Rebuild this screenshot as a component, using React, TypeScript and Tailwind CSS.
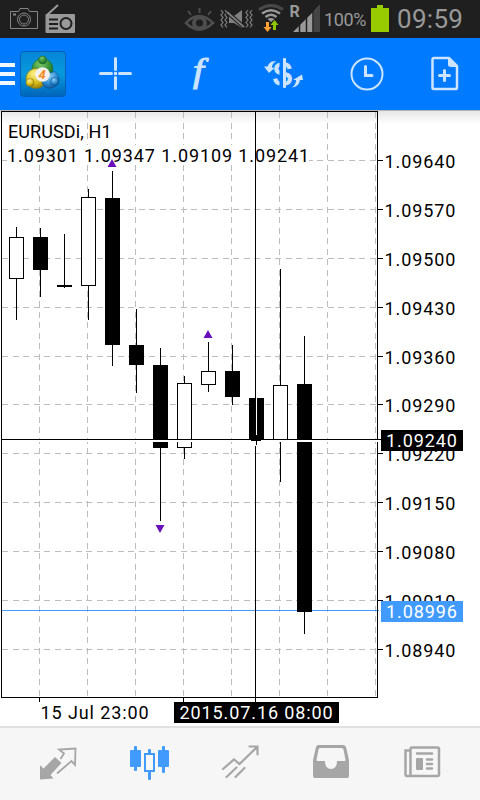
import React from 'react';

interface Candle {
  x: number;
  high: number;
  top: number;
  bottom: number;
  low: number;
  hollow?: boolean;
}

// Candle geometry in chart pixels, x is the column of the wick
const CANDLES: Candle[] = [
  { x: 16, high: 227, top: 237, bottom: 279, low: 320, hollow: true },
  { x: 40, high: 228, top: 237, bottom: 270, low: 297 },
  { x: 64, high: 234, top: 285, bottom: 287, low: 288 },
  { x: 88, high: 189, top: 197, bottom: 286, low: 320, hollow: true },
  { x: 112, high: 171, top: 198, bottom: 345, low: 366 },
  { x: 136, high: 309, top: 345, bottom: 365, low: 393 },
  { x: 160, high: 348, top: 365, bottom: 448, low: 521 },
  { x: 184, high: 376, top: 383, bottom: 448, low: 459, hollow: true },
  { x: 208, high: 342, top: 371, bottom: 385, low: 392, hollow: true },
  { x: 232, high: 345, top: 371, bottom: 397, low: 405 },
  { x: 256, high: 398, top: 398, bottom: 440, low: 445 },
  { x: 280, high: 269, top: 385, bottom: 442, low: 482, hollow: true },
  { x: 304, high: 336, top: 384, bottom: 612, low: 634 },
];

const PRICES = [
  { y: 160, label: '1.09640' },
  { y: 209, label: '1.09570' },
  { y: 258, label: '1.09500' },
  { y: 307, label: '1.09430' },
  { y: 356, label: '1.09360' },
  { y: 404, label: '1.09290' },
  { y: 453, label: '1.09220' },
  { y: 502, label: '1.09150' },
  { y: 551, label: '1.09080' },
  { y: 600, label: '1.09010' },
  { y: 649, label: '1.08940' },
];

const COLUMNS = [39, 87, 135, 183, 231, 279, 327, 375];

const StatusBar = () => (
  <div className="flex h-[38px] items-center bg-[#1f1f1f] text-[#999]">
    {/* Camera */}
    <svg width="42" height="38" fill="none" stroke="#858585">
      <path d="M10.5 11.5h8l1.5-3h8l1.500 3h8v17h-27z" />
      <circle cx="24" cy="19.500" r="6.500" />
      <circle cx="24" cy="19.500" r="4.500" />
      <path d="M13 14.500h3" strokeWidth="2" />
    </svg>
    {/* Radio */}
    <svg width="38" height="38" fill="none" stroke="#999">
      <path d="M5 15L16 5" strokeWidth="2" />
      <rect x="3.500" y="14" width="29.500" height="19" rx="1" fill="#999" stroke="none" />
      <path d="M7 19.500h9M7 24h9M7 28.500h9" stroke="#1f1f1f" strokeWidth="1.800" />
      <circle cx="24" cy="23.500" r="5.500" stroke="#1f1f1f" strokeWidth="2" />
    </svg>
    <div className="flex-1" />
    {/* Eye */}
    <svg width="37" height="38" fill="none" stroke="#4d4d4d">
      <path d="M6 23Q19 9 33 23Q19 36 6 23Z" strokeWidth="2.500" />
      <circle cx="19.500" cy="23" r="5.500" strokeWidth="4" />
      <path d="M19.500 8v5M8 11l3 4M31 11l-3 4" strokeWidth="2" />
    </svg>
    {/* Sound off, vibrate */}
    <svg width="38" height="38" fill="none" stroke="#808080">
      <path d="M4 10l2 2.500-2 2.500 2 2.500-2 2.500 2 2.500-2 2.500 2 2.500M8 10l2 2.500-2 2.500 2 2.500-2 2.500 2 2.500-2 2.500 2 2.500M31 10l-2 2.500 2 2.500-2 2.500 2 2.500-2 2.500 2 2.500-2 2.500M35 10l-2 2.500 2 2.500-2 2.500 2 2.500-2 2.500 2 2.500-2 2.500" strokeWidth="1.200" />
      <path d="M12 16h5l8-6v18l-8-5h-5z" fill="#808080" stroke="none" />
      <path d="M10 12l17 15" stroke="#1f1f1f" strokeWidth="4" />
      <path d="M10 12l17 15" strokeWidth="1.800" />
    </svg>
    {/* Wifi with traffic arrows */}
    <svg width="33" height="38" fill="none">
      <path d="M4 9.500Q16 1.500 28 9.500" stroke="#484848" strokeWidth="3" />
      <path d="M7 13.500Q16 7 25 13.500M10.500 17Q16 12.500 21.500 17" stroke="#999" strokeWidth="2.500" />
      <path d="M12.500 19q3.500-2 7 0l-3.500 3z" fill="#999" />
      <path d="M11 22h3v5h2.500L12.500 32 8.500 27H11z" fill="#ffa033" />
      <path d="M18 30h3v-5h2.500L19.500 20l-4 5H18z" fill="#8fc800" />
    </svg>
    {/* Roaming signal */}
    <svg width="34" height="38">
      <text x="1.500" y="17" fill="#999" className="font-['Roboto',sans-serif] text-[16px] font-bold">R</text>
      <path d="M5 32L32 5v27z" fill="#999" />
      <path d="M25.500 11.500L32 5v27h-6.500z" fill="#444" />
      <path d="M11.500 22v10M18.500 15v17M25 9v23" stroke="#1f1f1f" strokeWidth="1.500" />
    </svg>
    <span className="w-[46px] pl-0.5 font-['Roboto',sans-serif] text-[18px] tracking-[-0.4px]">100%</span>
    <svg width="24" height="38" fill="#99cc00">
      <path d="M9 5h6v3h6v24H3V8h6z" />
    </svg>
    <span className="w-[88px] pl-[5px] font-['Roboto',sans-serif] text-[26px] tracking-[0.3px]">09:59</span>
  </div>
);

const Logo = () => (
  <svg width="46" height="46" viewBox="0 0 46 46">
    <defs>
      <linearGradient id="tile" x1="0" y1="0" x2="0" y2="1">
        <stop offset="0" stopColor="#0786d8" />
        <stop offset="0.5" stopColor="#0799dc" />
        <stop offset="1" stopColor="#0065bb" />
      </linearGradient>
      <radialGradient id="green" cx="0.4" cy="0.25" r="0.8">
        <stop offset="0" stopColor="#7fc766" />
        <stop offset="0.6" stopColor="#2f8e35" />
        <stop offset="1" stopColor="#1a5f24" />
      </radialGradient>
      <radialGradient id="yellow" cx="0.4" cy="0.25" r="0.8">
        <stop offset="0" stopColor="#fbf08a" />
        <stop offset="0.6" stopColor="#d9bd1c" />
        <stop offset="1" stopColor="#8c7407" />
      </radialGradient>
      <radialGradient id="blue" cx="0.4" cy="0.25" r="0.8">
        <stop offset="0" stopColor="#8fd0f4" />
        <stop offset="0.6" stopColor="#2c8ad0" />
        <stop offset="1" stopColor="#0b4f93" />
      </radialGradient>
    </defs>
    <rect x="0.5" y="0.5" width="45" height="45" rx="3" fill="url(#tile)" stroke="#0060b4" />
    <circle cx="22.500" cy="18" r="10.500" fill="url(#green)" stroke="#1c6a2a" strokeWidth="0.600" />
    <circle cx="16" cy="27.500" r="10" fill="url(#yellow)" stroke="#8c7407" strokeWidth="0.600" />
    <path d="M22.500 24L35 20.500Q41 26 38.500 32 34 38.500 27 37 20.500 35 22.500 24z" fill="url(#blue)" stroke="#0b4f93" strokeWidth="0.600" />
    <circle cx="22.500" cy="9" r="4" fill="url(#green)" stroke="#1c6a2a" strokeWidth="0.600" />
    <circle cx="10" cy="31.500" r="4" fill="url(#yellow)" stroke="#8c7407" strokeWidth="0.600" />
    <circle cx="34.500" cy="30.500" r="4" fill="url(#blue)" stroke="#0b4f93" strokeWidth="0.600" />
    <circle cx="22.500" cy="23.500" r="7.300" fill="#f3f1ee" />
    <text x="22" y="28" textAnchor="middle" fill="#f58a1f" className="font-['Roboto',sans-serif] text-[13px] font-bold italic">4</text>
  </svg>
);

const Header = () => (
  <div className="flex h-[72px] items-center bg-[#007aff]">
    <div className="flex w-5 flex-col gap-[5px]">
      <div className="h-1 w-[15px] bg-[#f0f7ff]" />
      <div className="h-1 w-[15px] bg-[#f0f7ff]" />
      <div className="h-1 w-[15px] bg-[#f0f7ff]" />
    </div>
    <div className="w-[54px]">
      <Logo />
    </div>
    {/* Crosshair */}
    <svg width="83" height="72" stroke="#cce4ff" fill="none">
      <path d="M26.500 35.500h11M45.500 35.500h11M41.500 20.500v11M41.500 39.500v11" strokeWidth="3" strokeLinecap="round" />
      <rect x="40" y="34" width="3" height="3" fill="#cce4ff" stroke="none" />
    </svg>
    {/* Indicators */}
    <svg width="84" height="72" fill="#cce4ff">
      <text x="0" y="0" transform="translate(36 44) scale(1.150 1)" stroke="#cce4ff" strokeWidth="1" className="font-['Liberation_Serif',serif] text-[34px] italic">f</text>
    </svg>
    {/* Trade */}
    <svg width="84" height="72" fill="#cce4ff">
      <text x="31.500" y="47" stroke="#cce4ff" strokeWidth="1.400" className="font-['Liberation_Sans',sans-serif] text-[32px]" textLength="20" lengthAdjust="spacingAndGlyphs">S</text>
      <rect x="38.500" y="19" width="5" height="32" fill="#007aff" />
      <rect x="42" y="20" width="3" height="30" rx="1" />
      <path d="M23 28.500h3.500Q29 22 35.500 23.500 31 25 31 29.500l2.500.5L28 35z" />
      <path d="M62 42l-1-5.500L52 42h3q0 5-4 7.500 7-.5 8-7.500z" />
    </svg>
    {/* Periods */}
    <svg width="84" height="72" stroke="#cce4ff" fill="none">
      <circle cx="42" cy="36" r="15.500" strokeWidth="2" />
      <path d="M40.500 28.500v9h6.500" strokeWidth="3" strokeLinecap="round" />
    </svg>
    {/* New order */}
    <svg width="71" height="72" stroke="#cce4ff" fill="none">
      <path d="M25 20h15l8 8v22q0 1-1 1H25q-1.500 0-1.500-1V21.500q0-1.500 1.500-1.500z" strokeWidth="2.500" />
      <path d="M39 19.500v7q0 2.500 3 2.500h6.500z" fill="#cce4ff" stroke="none" />
      <path d="M35.500 32.500v10M30.500 37.500h10" strokeWidth="3" strokeLinecap="round" />
    </svg>
  </div>
);

const Chart = () => (
  <svg width="480" height="616" viewBox="0 110 480 616" className="block bg-white font-['Roboto',sans-serif] text-[18px]" shapeRendering="crispEdges">
    <defs>
      <linearGradient id="shade" x1="0" y1="0" x2="0" y2="1">
        <stop offset="0" stopColor="#e6e6e6" />
        <stop offset="1" stopColor="#ffffff" />
      </linearGradient>
    </defs>
    <rect x="0" y="111" width="480" height="13" fill="url(#shade)" />
    <rect x="0" y="110" width="480" height="1" fill="#b4b4b4" />

    {/* Grid */}
    <g stroke="#bdbdbd" strokeDasharray="6 4.5">
      {PRICES.map((p) => (
        <path key={p.y} d={`M2 ${p.y + 0.5}H377`} />
      ))}
      {COLUMNS.map((x) => (
        <path key={x} d={`M${x + 0.5} 112V697`} />
      ))}
    </g>

    <path d="M2 610.500H379" stroke="#419bff" />

    {/* Symbol and OHLC */}
    <rect x="7" y="145" width="302" height="20" fill="#fff" />
    <text x="8" y="138" className="tracking-[0.1px]">EURUSDi, H1</text>
    <text x="7" y="162" className="tracking-[0.9px]">1.09301 1.09347 1.09109 1.09241</text>

    {/* Candles */}
    {CANDLES.map((c) => (
      <g key={c.x}>
        <rect x={c.x} y={c.high} width="1" height={c.low - c.high} />
        {c.hollow ? (
          <rect x={c.x - 6.5} y={c.top + 0.5} width="14" height={c.bottom - c.top - 1} fill="#fff" stroke="#000" />
        ) : (
          <rect x={c.x - 7} y={c.top} width="15" height={c.bottom - c.top} />
        )}
      </g>
    ))}

    {/* Fractals */}
    <g fill="#6a10b8" shapeRendering="auto">
      <path d="M112 159l4.500 8h-9z" />
      <path d="M208 330l4.500 8h-9z" />
      <path d="M160 533l4.500-8h-9z" />
    </g>

    {/* Frame */}
    <rect x="1.500" y="111.500" width="376" height="586" fill="none" stroke="#000" />
    {PRICES.map((p) => (
      <g key={p.label}>
        <rect x="378" y={p.y} width="5" height="1" />
        <text x="384.500" y={p.y + 8} className="tracking-[0.9px]">{p.label}</text>
      </g>
    ))}
    <rect x="39" y="698" width="1" height="4" />
    <rect x="183" y="698" width="1" height="4" />
    <text x="40.500" y="719" className="tracking-[0.9px]">15 Jul 23:00</text>

    {/* Crosshair */}
    <rect x="2" y="440" width="376" height="2" fill="#fff" />
    <rect x="255" y="112" width="1" height="324" />
    <rect x="256" y="398" width="1" height="37" fill="#fff" />
    <rect x="255" y="446" width="1" height="256" />
    <rect x="2" y="439" width="379" height="1" />
    <rect x="251" y="436" width="10" height="5" />
    <rect x="256" y="441" width="1" height="4" />

    <rect x="381" y="430" width="82" height="21" />
    <text x="386" y="447" fill="#fff" className="tracking-[0.9px]">1.09240</text>
    <rect x="381" y="601" width="82" height="21" fill="#419bff" />
    <text x="386" y="618" fill="#fff" className="tracking-[0.9px]">1.08996</text>
    <rect x="174" y="702" width="165" height="21" />
    <text x="179.500" y="719" fill="#fff" className="tracking-[0.9px]">2015.07.16 08:00</text>
  </svg>
);

const TabBar = () => (
  <div className="flex h-[74px] border-t-2 border-[#e0e0e0] bg-[#f6f6f6] pl-3">
    {/* Quotes */}
    <div className="flex w-[91px] justify-center">
      <svg width="45" height="72" fill="none" stroke="#a6a6a6">
        <path d="M5 37l3.500 3.500L20 29l6.500 6L15.500 47l3 3.500L5 51.500z" fill="#a6a6a6" stroke="none" />
        <path d="M25.500 31L29 25.500 24 21.500 40.500 20.500 40 37 36.500 33 22 45.500" strokeWidth="1.800" />
      </svg>
    </div>
    {/* Chart */}
    <div className="flex w-[91px] justify-center">
      <svg width="45" height="72" fill="#419bff">
        <rect x="4" y="22" width="11" height="17" rx="1" />
        <rect x="8" y="18" width="3" height="25" rx="1" />
        <rect x="32" y="22" width="11" height="17" rx="1" />
        <rect x="36" y="18" width="3" height="27" rx="1" />
        <rect x="22" y="21" width="3" height="31" rx="1" />
        <rect x="19" y="26" width="9" height="17" fill="#f6f6f6" stroke="#419bff" strokeWidth="2" />
      </svg>
    </div>
    {/* Trade */}
    <div className="flex w-[91px] justify-center">
      <svg width="45" height="72" fill="none" stroke="#a6a6a6" strokeWidth="2.200" strokeLinecap="round">
        <path d="M6 41L17 31.500 22.500 36 40 19M32.500 18.500H40.500V26.500M9.500 49L19.500 39.500M18.500 49L27.500 40" />
      </svg>
    </div>
    {/* History */}
    <div className="flex w-[91px] justify-center">
      <svg width="45" height="72">
        <path fill="#a6a6a6" fillRule="evenodd" d="M10 17h25q2 0 3 2l3 13v16q0 2-2 2H7q-2 0-2-2V32l3-13q1-2 2-2zM12 20q-1 0-1.500 1.500L8.500 32q0 1 1 1H17q0 8 6 8t6-8h7.500q1 0 1-1L35.500 21.500Q35 20 34 20z" />
      </svg>
    </div>
    {/* News */}
    <div className="flex w-[91px] justify-center">
      <svg width="45" height="72" fill="none" stroke="#a6a6a6" strokeWidth="2.500">
        <path d="M11.500 48V21q0-1.500 1.500-1.500h25.500q1.500 0 1.500 1.500v25.500q0 1.500-1.500 1.500H8q-1.500 0-1.500-1.500V22.500h5" />
        <path d="M18 25.500h15M28 31.500h5M28 36h5M28 40.500h5" strokeLinecap="round" />
        <rect x="17" y="30" width="7" height="12" rx="1" fill="#a6a6a6" stroke="none" />
      </svg>
    </div>
  </div>
);

const App: React.FC = () => {
  return (
    <div className="flex h-[800px] w-[480px] flex-col overflow-hidden bg-white">
      <StatusBar />
      <Header />
      <Chart />
      <TabBar />
    </div>
  );
};

export default App;
